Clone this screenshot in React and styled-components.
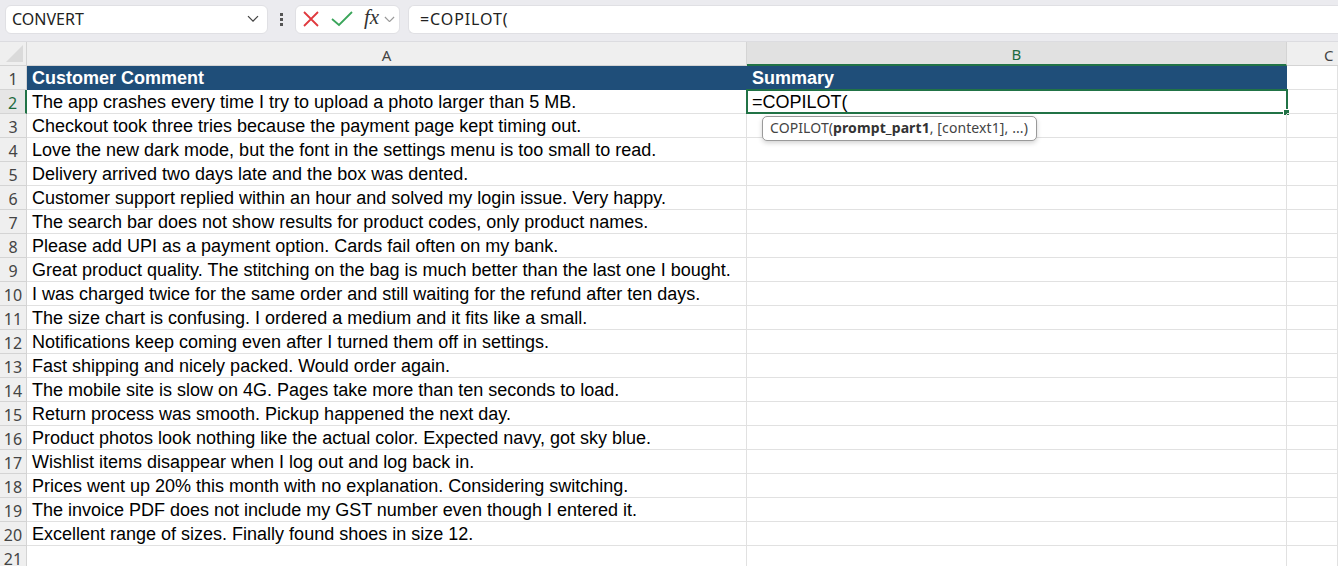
import styled, { createGlobalStyle } from 'styled-components'

const GlobalStyle = createGlobalStyle`
    html, body {
        margin: 0;
        padding: 0;
        background: #ffffff;
        overflow: hidden;
    }
`

const comments = [
    'The app crashes every time I try to upload a photo larger than 5 MB.',
    'Checkout took three tries because the payment page kept timing out.',
    'Love the new dark mode, but the font in the settings menu is too small to read.',
    'Delivery arrived two days late and the box was dented.',
    'Customer support replied within an hour and solved my login issue. Very happy.',
    'The search bar does not show results for product codes, only product names.',
    'Please add UPI as a payment option. Cards fail often on my bank.',
    'Great product quality. The stitching on the bag is much better than the last one I bought.',
    'I was charged twice for the same order and still waiting for the refund after ten days.',
    'The size chart is confusing. I ordered a medium and it fits like a small.',
    'Notifications keep coming even after I turned them off in settings.',
    'Fast shipping and nicely packed. Would order again.',
    'The mobile site is slow on 4G. Pages take more than ten seconds to load.',
    'Return process was smooth. Pickup happened the next day.',
    'Product photos look nothing like the actual color. Expected navy, got sky blue.',
    'Wishlist items disappear when I log out and log back in.',
    'Prices went up 20% this month with no explanation. Considering switching.',
    'The invoice PDF does not include my GST number even though I entered it.',
    'Excellent range of sizes. Finally found shoes in size 12.',
]

const Page = styled.div`
    width: 1338px;
    height: 566px;
    overflow: hidden;
    font-family: 'Liberation Sans', Arial, sans-serif;
`

const Toolbar = styled.div`
    display: flex;
    align-items: center;
    height: 42px;
    padding: 0 0 0 5px;
    box-sizing: border-box;
    background: #ebebef;
    border-bottom: 1px solid #dcdce0;
`

const Box = styled.div`
    display: flex;
    align-items: center;
    height: 29px;
    margin-top: -3px;
    box-sizing: border-box;
    background: #ffffff;
    border: 1px solid #e0e0e4;
    border-radius: 6px;
    font-family: 'Noto Sans', 'Open Sans', sans-serif;
    font-size: 16px;
    color: #222;
`

const NameBox = styled(Box)`
    width: 263px;
    padding: 0 8px 0 6px;
    justify-content: space-between;
`

const Kebab = styled.div`
    display: flex;
    flex-direction: column;
    gap: 2px;
    margin: -3px 12px 0 12px;
    span {
        width: 3px;
        height: 3px;
        background: #555;
    }
`

const FxBox = styled(Box)`
    width: 105px;
    padding: 0 0 0 6px;
    gap: 0;
`

const FormulaInput = styled(Box)`
    flex: 1;
    margin-left: 8px;
    padding-left: 11px;
    border-radius: 6px 0 0 6px;
    border-right: none;
    letter-spacing: 0.9px;
`

const Grid = styled.div`
    display: grid;
    grid-template-columns: 27px 720px 540px 1fr;
    grid-auto-rows: 24px;
`

const Corner = styled.div`
    position: relative;
    background: #efefef;
    border-right: 1px solid #d4d4d4;
    border-bottom: 1px solid #d4d4d4;
    box-sizing: border-box;
    &::after {
        content: '';
        position: absolute;
        right: 3px;
        bottom: 3px;
        border-left: 17px solid transparent;
        border-bottom: 17px solid #dadada;
    }
`

const ColHead = styled.div`
    display: flex;
    align-items: center;
    justify-content: center;
    box-sizing: border-box;
    background: ${(p) => (p.$active ? '#e1e1e1' : '#efefef')};
    border-right: 1px solid #d4d4d4;
    border-bottom: ${(p) => (p.$active ? '2px solid #217346' : '1px solid #d4d4d4')};
    color: ${(p) => (p.$active ? '#1d6b3e' : '#444')};
    font-family: 'Noto Sans', 'Open Sans', sans-serif;
    font-size: 15px;
    padding-top: 2px;
    ${(p) => p.$last && 'justify-content: flex-start; padding-left: 37px; border-right: none;'}
`

const RowHead = styled.div`
    display: flex;
    align-items: center;
    justify-content: center;
    box-sizing: border-box;
    background: ${(p) => (p.$active ? '#e6e6e6' : '#efefef')};
    border-right: ${(p) => (p.$active ? '2px solid #217346' : '1px solid #d4d4d4')};
    border-bottom: 1px solid #d4d4d4;
    color: ${(p) => (p.$active ? '#1d6b3e' : '#444')};
    font-family: 'Noto Sans', 'Open Sans', sans-serif;
    font-size: 16px;
    padding-top: 2px;
`

const Cell = styled.div`
    position: relative;
    box-sizing: border-box;
    padding: 2px 0 0 5px;
    white-space: nowrap;
    font-size: 18px;
    line-height: 20px;
    color: #000;
    border-right: 1px solid #e1e1e1;
    border-bottom: 1px solid #e1e1e1;
    ${(p) =>
        p.$header &&
        `
        background: #1f4e79;
        color: #ffffff;
        font-weight: bold;
        border-right: none;
        border-bottom-color: #1f4e79;
    `}
`

const ActiveFrame = styled.div`
    position: absolute;
    left: -1px;
    top: -1px;
    right: -2px;
    bottom: -1px;
    border: 2px solid #217346;
    pointer-events: none;
    &::after {
        content: '';
        position: absolute;
        right: -4px;
        bottom: -4px;
        width: 5px;
        height: 5px;
        background: #217346;
        border: 1px solid #fff;
    }
`

const Hint = styled.div`
    position: absolute;
    left: 15px;
    top: 26px;
    z-index: 2;
    padding: 1px 8px 2px 7px;
    background: #ffffff;
    border: 1px solid #9a9a9a;
    border-radius: 5px;
    box-shadow: 0 2px 5px rgba(0, 0, 0, 0.18);
    font-family: 'Noto Sans', 'Open Sans', sans-serif;
    font-size: 14px;
    letter-spacing: 0.1px;
    color: #444;
    b {
        color: #333;
    }
`

const Fx = styled.span`
    font-family: 'Liberation Serif', 'Times New Roman', serif;
    font-style: italic;
    font-size: 21px;
    color: #333;
    margin: -3px 5px 0 11px;
`

function XIcon() {
    return (
        <svg width="18" height="18" viewBox="0 0 18 18">
            <path d="M2 2 L16 16 M16 2 L2 16" stroke="#e0393e" strokeWidth="1.8" fill="none" />
        </svg>
    )
}

function CheckIcon() {
    return (
        <svg width="22" height="18" viewBox="0 0 22 18" style={{ marginLeft: 11 }}>
            <path d="M1 9 L8 15 L21 2" stroke="#3aa55a" strokeWidth="1.8" fill="none" />
        </svg>
    )
}

function Chevron({ color = '#444', size = 12 }) {
    return (
        <svg width={size} height={size * 0.6} viewBox="0 0 12 7">
            <path d="M1 1 L6 6 L11 1" stroke={color} strokeWidth="1.3" fill="none" />
        </svg>
    )
}

function App() {
    return (
        <Page>
            <GlobalStyle />
            <Toolbar>
                <NameBox>
                    CONVERT
                    <Chevron />
                </NameBox>
                <Kebab>
                    <span />
                    <span />
                    <span />
                </Kebab>
                <FxBox>
                    <XIcon />
                    <CheckIcon />
                    <Fx>fx</Fx>
                    <Chevron color="#999" size={11} />
                </FxBox>
                <FormulaInput>=COPILOT(</FormulaInput>
            </Toolbar>
            <Grid>
                <Corner />
                <ColHead>A</ColHead>
                <ColHead $active>B</ColHead>
                <ColHead $last>C</ColHead>

                <RowHead>1</RowHead>
                <Cell $header>Customer Comment</Cell>
                <Cell $header>Summary</Cell>
                <Cell />

                {comments.map((text, i) => {
                    const row = i + 2
                    const active = row === 2
                    return [
                        <RowHead key={`h${row}`} $active={active}>
                            {row}
                        </RowHead>,
                        <Cell key={`a${row}`}>{text}</Cell>,
                        <Cell key={`b${row}`}>
                            {active && '=COPILOT('}
                            {active && <ActiveFrame />}
                            {active && (
                                <Hint>
                                    COPILOT(<b>prompt_part1</b>, [context1], ...)
                                </Hint>
                            )}
                        </Cell>,
                        <Cell key={`c${row}`} />,
                    ]
                })}

                <RowHead>21</RowHead>
                <Cell />
                <Cell />
                <Cell />
            </Grid>
        </Page>
    )
}

export default App
